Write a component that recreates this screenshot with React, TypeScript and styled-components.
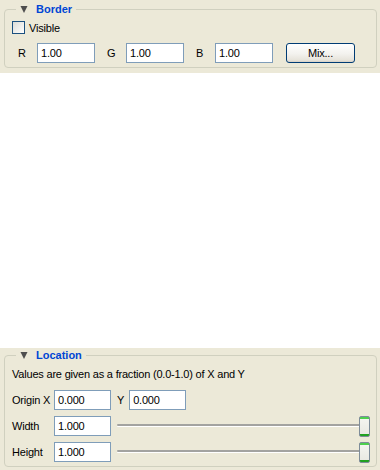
import React from 'react';
import styled, { createGlobalStyle } from 'styled-components';

const GlobalStyle = createGlobalStyle`
  html, body {
    margin: 0;
    padding: 0;
    background: #ffffff;
  }

  body {
    font-family: 'Liberation Sans', Arial, sans-serif;
    font-size: 11px;
    letter-spacing: -0.2px;
    color: #000000;
  }
`;

interface SliderProps {
  value: number;
}

const Slider: React.FunctionComponent<SliderProps> = ({ value }) => {
  const pct = Math.max(0, Math.min(1, value)) * 100;

  return (
    <SliderBox>
      <Track />
      <Thumb style={{ left: `calc(${pct}% - ${(pct * 11) / 100}px)` }} />
    </SliderBox>
  );
};

const Expander: React.FunctionComponent = () => (
  <svg width="8" height="8" viewBox="0 0 8 8">
    <polygon points="0.5,1 7.5,1 4,8" fill="#4e4e4e" />
  </svg>
);

const App: React.FunctionComponent = () => (
  <>
    <GlobalStyle />
    <Page>
      <Panel top>
        <Group>
          <Legend>
            <Expander />
            <Title>Border</Title>
          </Legend>

          <CheckRow>
            <CheckBox />
            <span>Visible</span>
          </CheckRow>

          <ColorRow>
            <ChannelLabel>R</ChannelLabel>
            <Field defaultValue="1.00" width={58} />
            <ChannelLabel>G</ChannelLabel>
            <Field defaultValue="1.00" width={58} />
            <ChannelLabel>B</ChannelLabel>
            <Field defaultValue="1.00" width={58} />
            <MixButton>Mix...</MixButton>
          </ColorRow>
        </Group>
      </Panel>

      <Blank />

      <Panel>
        <Group>
          <Legend>
            <Expander />
            <Title>Location</Title>
          </Legend>

          <Note>Values are given as a fraction (0.0-1.0) of X and Y</Note>

          <LocationGrid>
            <RowLabel>Origin X</RowLabel>
            <Field defaultValue="0.000" width={57} />
            <Inline>
              <span>Y</span>
              <Field defaultValue="0.000" width={57} />
            </Inline>

            <RowLabel>Width</RowLabel>
            <Field defaultValue="1.000" width={57} />
            <Slider value={1} />

            <RowLabel>Height</RowLabel>
            <Field defaultValue="1.000" width={57} />
            <Slider value={1} />
          </LocationGrid>
        </Group>
      </Panel>
    </Page>
  </>
);

const Page = styled.div`
  display: flex;
  flex-direction: column;
  width: 380px;
  height: 470px;
  background: #ffffff;
`;

const Panel = styled.div<{ top?: boolean }>`
  background: #ece9d8;
  padding: ${({ top }) => (top ? '2px 3px 5px 4px' : '0 3px 3px 4px')};
`;

const Blank = styled.div`
  flex: 1;
`;

const Group = styled.fieldset`
  margin: 0;
  padding: 0 6px 4px 7px;
  border: 1px solid #d0d0bf;
  border-radius: 4px;
  min-width: 0;
`;

const Legend = styled.legend`
  display: flex;
  align-items: center;
  gap: 8px;
  height: 14px;
  margin-left: 4px;
  padding: 0 4px;
`;

const Title = styled.span`
  color: #0046d5;
  font-weight: bold;
  font-size: 11px;
  letter-spacing: 0;
  line-height: 14px;
`;

const CheckRow = styled.div`
  display: flex;
  align-items: center;
  gap: 4px;
  height: 13px;
  margin-top: 5px;
`;

const CheckBox = styled.span`
  box-sizing: border-box;
  width: 13px;
  height: 13px;
  border: 1px solid #1c5180;
  background: linear-gradient(135deg, #dcdcd7 0%, #f4f4f2 70%, #ffffff 100%);
`;

const ColorRow = styled.div`
  display: flex;
  align-items: center;
  gap: 12px;
  height: 20px;
  margin-top: 9px;
  padding-left: 6px;
`;

const ChannelLabel = styled.span`
  width: 7px;
  line-height: 13px;
`;

const Field = styled.input<{ width: number }>`
  box-sizing: border-box;
  width: ${({ width }) => width}px;
  height: 20px;
  margin: 0;
  padding: 0 3px;
  border: 1px solid #7f9db9;
  background: #ffffff;
  font-family: 'Liberation Sans', Arial, sans-serif;
  font-size: 11px;
  letter-spacing: -0.2px;
  color: #000000;
  outline: none;
`;

const MixButton = styled.button`
  box-sizing: border-box;
  width: 69px;
  height: 20px;
  margin-left: 1px;
  padding: 0;
  border: 1px solid #003c74;
  border-radius: 3px;
  background: linear-gradient(#ffffff 0%, #f3f2ee 55%, #e6e3da 90%, #d6d0c5 100%);
  font-family: 'Liberation Sans', Arial, sans-serif;
  font-size: 11px;
  letter-spacing: -0.2px;
  color: #000000;
`;

const Note = styled.div`
  margin-top: 6px;
  line-height: 13px;
  white-space: nowrap;
`;

const LocationGrid = styled.div`
  display: grid;
  grid-template-columns: 42px 57px 1fr;
  grid-auto-rows: 20px;
  row-gap: 6px;
  align-items: center;
  margin-top: 9px;
`;

const RowLabel = styled.span`
  line-height: 13px;
`;

const Inline = styled.div`
  display: flex;
  align-items: center;
  gap: 5px;
  padding-left: 6px;
`;

const SliderBox = styled.div`
  position: relative;
  height: 21px;
  margin-left: 6px;
`;

const Track = styled.div`
  position: absolute;
  left: 0;
  right: 0;
  top: 8px;
  height: 2px;
  border-radius: 2px 0 0 2px;
  background: #a3a3a0;
  box-shadow: 0 1px 0 #ffffff;
`;

const Thumb = styled.div`
  position: absolute;
  top: 0;
  box-sizing: border-box;
  width: 11px;
  height: 21px;
  border: 1px solid #7e8c99;
  border-radius: 2px;
  background: linear-gradient(
    #4ed04e 0,
    #4ed04e 2px,
    #f4f4f0 2px,
    #e9e9e3 calc(100% - 2px),
    #21a121 calc(100% - 2px)
  );
`;

export default App;
